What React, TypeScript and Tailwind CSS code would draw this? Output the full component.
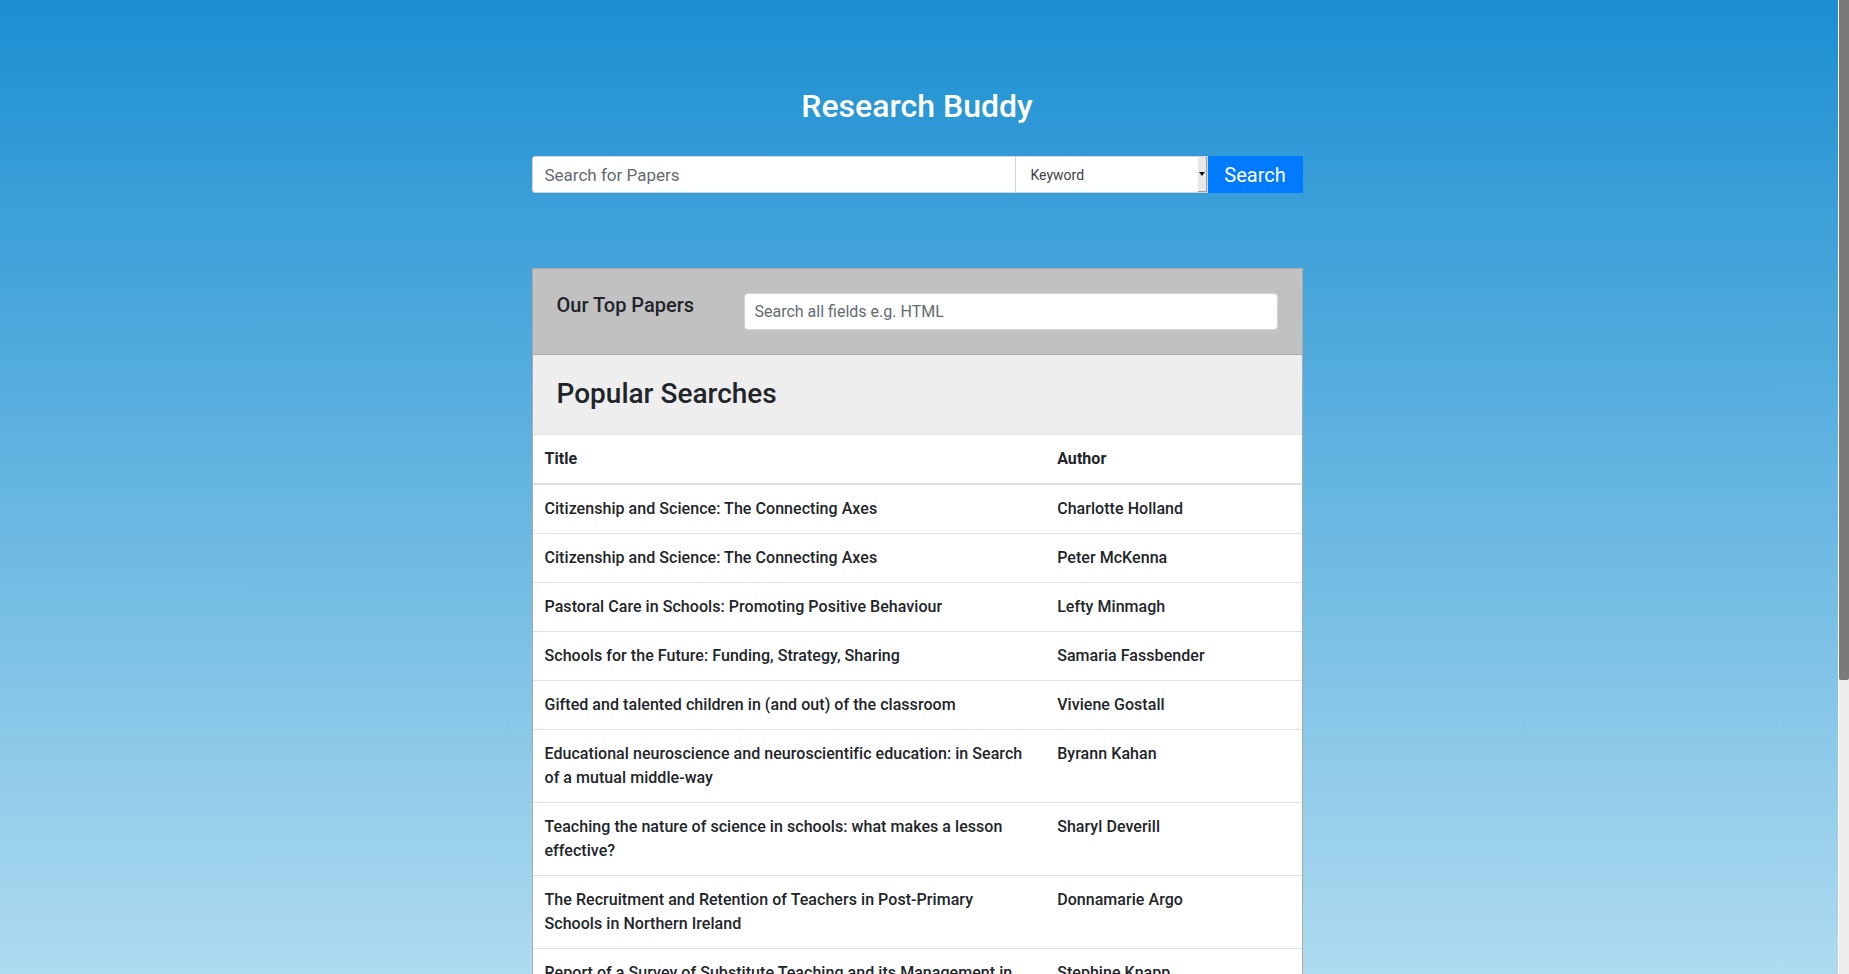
import React from "react";

const papers = [
  { title: "Citizenship and Science: The Connecting Axes", author: "Charlotte Holland" },
  { title: "Citizenship and Science: The Connecting Axes", author: "Peter McKenna" },
  { title: "Pastoral Care in Schools: Promoting Positive Behaviour", author: "Lefty Minmagh" },
  { title: "Schools for the Future: Funding, Strategy, Sharing", author: "Samaria Fassbender" },
  { title: "Gifted and talented children in (and out) of the classroom", author: "Viviene Gostall" },
  {
    title: "Educational neuroscience and neuroscientific education: in Search of a mutual middle-way",
    author: "Byrann Kahan",
  },
  { title: "Teaching the nature of science in schools: what makes a lesson effective?", author: "Sharyl Deverill" },
  {
    title: "The Recruitment and Retention of Teachers in Post-Primary Schools in Northern Ireland",
    author: "Donnamarie Argo",
  },
  {
    title: "Report of a Survey of Substitute Teaching and its Management in Northern Ireland Schools",
    author: "Stephine Knapp",
  },
  { title: "Effective Pre-School Provision in Northern Ireland", author: "Charlotte Holland" },
  { title: "Inclusion and Diversity in the Primary Classroom", author: "Peter McKenna" },
];

const SearchBar = () => (
  <div className="flex h-[37px] w-full">
    <input
      type="text"
      placeholder="Search for Papers"
      className="h-full flex-1 rounded-l-[3px] border border-[#ced4da] bg-white px-3 text-[17px] text-[#495057] placeholder:text-[#636b72] outline-none"
    />
    <div className="flex h-full w-[192px] items-stretch border-y border-r border-[#ced4da] bg-white">
      <span className="flex flex-1 items-center pl-[15px] text-sm text-[#3f3f46]">Keyword</span>
      <span className="flex w-[9px] items-center justify-center border-r border-b border-[#a0a0a0] bg-[#e8e8e8]">
        <svg width="6" height="4" viewBox="0 0 6 4">
          <path d="M0 0h6L3 4z" fill="#111" />
        </svg>
      </span>
    </div>
    <button className="h-full w-[95px] bg-[#007bff] text-xl text-white">Search</button>
  </div>
);

const TopPapers = () => (
  <div className="border border-[#a9a9a9] bg-white">
    <div className="flex items-start border-b border-[#a9a9a9] bg-[#c1c1c1] p-6">
      <h5 className="w-[187px] text-xl leading-[1.2] font-medium text-[#212529]">Our Top Papers</h5>
      <input
        type="text"
        placeholder="Search all fields e.g. HTML"
        className="h-[37px] flex-1 rounded-[4px] border border-[#ced4da] bg-white px-[10px] text-base text-[#495057] placeholder:text-[#636b72] outline-none"
      />
    </div>
    <div className="bg-[#eeeeee] px-6 pt-[22px] pb-[23px]">
      <h3 className="text-[28px] leading-[1.2] font-medium text-[#212529]">Popular Searches</h3>
    </div>
    <table className="w-full table-fixed border-collapse text-base leading-6 tracking-[0.05px] text-[#212529]">
      <thead>
        <tr>
          <th className="w-2/3 border-t border-b-2 border-[#dee2e6] p-3 text-left font-bold">Title</th>
          <th className="border-t border-b-2 border-[#dee2e6] p-3 text-left font-bold">Author</th>
        </tr>
      </thead>
      <tbody>
        {papers.map((p, i) => (
          <tr key={i}>
            <td className="border-t border-[#dee2e6] p-3 align-top font-medium">{p.title}</td>
            <td className="border-t border-[#dee2e6] p-3 align-top font-medium">{p.author}</td>
          </tr>
        ))}
      </tbody>
    </table>
  </div>
);

export default function App() {
  return (
    <div className="flex min-h-screen bg-[linear-gradient(to_bottom,#1b8fd2_0px,#afdbf0_974px,#d2ecf8_100%)] font-['Roboto','Liberation_Sans',sans-serif]">
      <main className="flex-1 pr-[4px] pb-[90px]">
        <div className="mx-auto w-[771px] pt-[87px]">
          <h1 className="text-center text-[32px] leading-[1.2] font-medium text-white">Research Buddy</h1>
          <div className="mt-[31px]">
            <SearchBar />
          </div>
          <div className="mt-[75px]">
            <TopPapers />
          </div>
        </div>
      </main>
      <aside className="sticky top-0 flex h-screen w-[11px] flex-col border-l border-white bg-[#eeeeee]">
        <div className="h-[680px] rounded-b-[2px] bg-[#7a7a7a]" />
      </aside>
    </div>
  );
}
